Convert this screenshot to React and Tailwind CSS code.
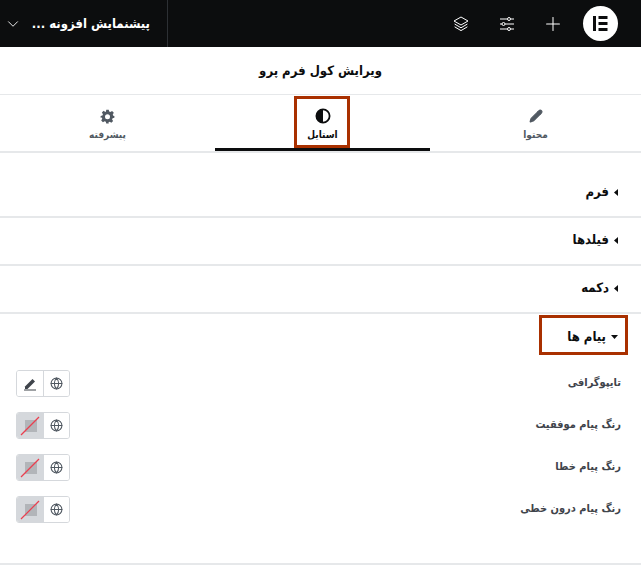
import React from "react";
import { Plus, Pencil, Globe, ChevronDown } from "lucide-react";

const Font = "font-['DejaVu_Sans_Condensed','DejaVu_Sans',sans-serif]";

function LayersIcon() {
  return (
    <svg width="16" height="16" viewBox="0 0 16 16" fill="none" stroke="#fff" strokeWidth="1" strokeLinejoin="round">
      <path d="M8 1 15 5 8 9 1 5Z" />
      <path d="M1.600 8 8 11.800 14.400 8" />
      <path d="M1.600 10.800 8 14.600 14.400 10.800" />
    </svg>
  );
}
function SlidersIcon() {
  return (
    <svg width="16" height="16" viewBox="0 0 16 16" fill="none" stroke="#fff" strokeWidth="1">
      <path d="M1 3h7.500M11.500 3H15M1 8h2M6 8h9M1 13h7.500M11.500 13H15" />
      <circle cx="10" cy="3" r="1.500" />
      <circle cx="4.500" cy="8" r="1.500" />
      <circle cx="10" cy="13" r="1.500" />
    </svg>
  );
}
function ElementorLogo() {
  return (
    <div className="flex h-[35px] w-[35px] items-center justify-center rounded-full bg-white">
      <svg width="15" height="15" viewBox="0 0 15 15" fill="#0c0d0e">
        <rect x="0" y="0" width="3" height="15" />
        <rect x="5.500" y="0" width="9" height="3" />
        <rect x="5.500" y="6" width="9" height="3" />
        <rect x="5.500" y="12" width="9" height="3" />
      </svg>
    </div>
  );
}
function GearIcon() {
  return (
    <svg width="15" height="15" viewBox="0 0 24 24" fill="#515962">
      <path fillRule="evenodd" d="M10 1h4l.7 3.100 1.900.8 2.700-1.700 2.800 2.800-1.700 2.700.8 1.900L23 11v3l-2.900.7-.8 1.900 1.700 2.700-2.800 2.800-2.700-1.700-1.900.8L14 23h-4l-.7-2.800-1.900-.8-2.700 1.700-2.800-2.800 1.700-2.700-.8-1.900L1 14v-3l2.900-.7.8-1.900L3 5.700l2.800-2.800 2.700 1.700 1-.5Z M12 8.500a4 4 0 1 0 0 8 4 4 0 0 0 0-8Z" />
    </svg>
  );
}
function ContrastIcon() {
  return (
    <svg width="16" height="16" viewBox="0 0 16 16">
      <circle cx="8" cy="8" r="6.600" fill="none" stroke="#0c0d0e" strokeWidth="1.800" />
      <path d="M8 1.400a6.600 6.600 0 0 0 0 13.200Z" fill="#0c0d0e" />
    </svg>
  );
}
function Caret({ open }) {
  return open ? (
    <svg width="7" height="4" viewBox="0 0 7 4" fill="#0c0d0e"><path d="M0 0h7L3.500 4Z" /></svg>
  ) : (
    <svg width="4" height="7" viewBox="0 0 4 7" fill="#0c0d0e"><path d="M4 0v7L0 3.500Z" /></svg>
  );
}

function Tab({ label, icon, active, width }) {
  return (
    <div className={`flex ${width} flex-col items-center justify-start gap-[3px] border-b-[3px] pt-[13px] ${active ? "border-[#0c0d0e] text-[#0c0d0e]" : "border-transparent text-[#515962]"}`}>
      <div className="flex h-[16px] items-center">{icon}</div>
      <span className="text-[10px] leading-[16px] font-bold">{label}</span>
    </div>
  );
}

function Section({ label }) {
  return (
    <div className="flex h-[48px] items-center gap-[5px] border-b-2 border-[#e6e8ea] pr-[23px] pb-[2px]">
      <Caret />
      <span className="text-[13px] font-bold text-[#0c0d0e]">{label}</span>
    </div>
  );
}

function NoColor() {
  return (
    <div className="relative flex h-full w-[27px] items-center justify-center bg-[#d5d8dc]">
      <div className="h-[12px] w-[12px] bg-[#b2b5b9]" />
      <svg className="absolute inset-0" width="27" height="26" viewBox="0 0 27 26">
        <path d="M4 22 22 4" stroke="#ea3f4f" strokeWidth="1.200" />
      </svg>
    </div>
  );
}

function Control({ label, left }) {
  return (
    <div className="flex h-[27px] items-center justify-between">
      <span className="text-[11px] font-semibold text-[#3f444b]">{label}</span>
      <div className="flex h-[27px] w-[54px] overflow-hidden rounded-[3px] border border-[#d5d8dc]" dir="ltr">
        {left}
        <div className="flex flex-1 items-center justify-center bg-white">
          <Globe size={13} color="#515962" strokeWidth={2} />
        </div>
      </div>
    </div>
  );
}

export default function App() {
  return (
    <div dir="rtl" className={`relative h-[566px] w-[641px] overflow-hidden bg-white ${Font}`}>
      <header className="flex h-[47px] items-center bg-[#0c0d0e] pr-[23px] text-white">
        <ElementorLogo />
        <div className="mr-[17px] flex w-[27px] justify-center"><Plus size={22} color="#fff" strokeWidth={1.100} /></div>
        <div className="mr-[19px] flex w-[27px] justify-center"><SlidersIcon /></div>
        <div className="mr-[19px] flex w-[27px] justify-center"><LayersIcon /></div>
        <div className="mr-auto flex h-full w-[168px] items-center border-r border-[#2d3034] pr-[17px]">
          <span className="flex-1 text-[13px] font-bold whitespace-nowrap">پیشنمایش افزونه ...</span>
          <ChevronDown size={18} color="#fff" strokeWidth={1.200} className="ml-[4px]" />
        </div>
      </header>

      <div className="flex h-[48px] items-center justify-center border-b border-[#e6e8ea] text-[13px] font-bold text-[#0c0d0e]">
        ویرایش کول فرم پرو
      </div>

      <div className="flex h-[58px] border-b-2 border-[#e6e8ea]">
        <Tab width="w-[211px]" label="محتوا" icon={<Pencil size={14} fill="#515962" color="#515962" />} />
        <Tab width="w-[215px]" label="استایل" icon={<ContrastIcon />} active />
        <Tab width="w-[215px]" label="پیشرفته" icon={<GearIcon />} />
      </div>

      <div className="pt-[17px]">
        <Section label="فرم" />
        <Section label="فیلدها" />
        <Section label="دکمه" />
      </div>

      <div className="border-b-2 border-[#e6e8ea] pb-[40px]">
        <div className="flex h-[48px] items-center gap-[5px] pr-[23px] pb-[2px]">
          <Caret open />
          <span className="text-[13px] font-bold text-[#0c0d0e]">پیام ها</span>
        </div>
        <div className="mt-[8px] flex flex-col gap-[15px] pr-[20px] pl-[16px]">
          <Control
            label="تایپوگرافی"
            left={
              <div className="flex w-[27px] items-center justify-center border-r border-[#d5d8dc] bg-white">
                <svg width="13" height="14" viewBox="0 0 13 14" fill="#3f444b">
                  <path d="M1 9.500 8.500 2l2.500 2.500L3.500 12H1Z" />
                  <rect x="0" y="12.500" width="12" height="1" />
                </svg>
              </div>
            }
          />
          <Control label="رنگ پیام موفقیت" left={<NoColor />} />
          <Control label="رنگ پیام خطا" left={<NoColor />} />
          <Control label="رنگ پیام درون خطی" left={<NoColor />} />
        </div>
      </div>

      <div className="pointer-events-none absolute top-[96px] left-[294px] h-[52px] w-[56px] border-[3px] border-[#a93000]" />
      <div className="pointer-events-none absolute top-[315px] left-[539px] h-[40px] w-[89px] border-[3px] border-[#a93000]" />
    </div>
  );
}
